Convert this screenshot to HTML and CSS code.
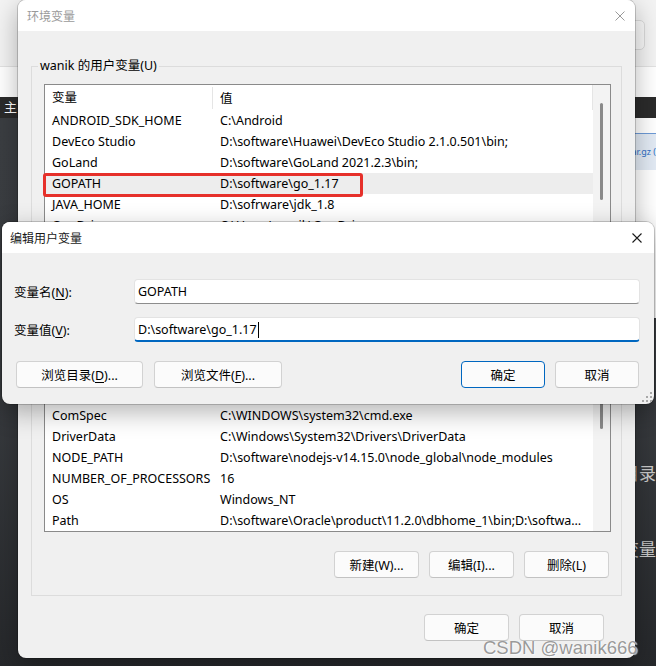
FILE: index.html
```html
<!DOCTYPE html>
<html lang="zh-CN">

<head>
  <meta charset="UTF-8" />
  <meta name="viewport" content="width=device-width, initial-scale=1.0" />
  <title>环境变量</title>
  <link rel="stylesheet" href="styles.css">
</head>

<body>
  <div class="desktop">

    <!-- browser page behind the dialogs -->
    <div class="browser">
      <div class="browser-top">
        <div class="search-box"></div>
      </div>
      <div class="browser-tabs"></div>
      <div class="browser-bar">主</div>
      <div class="page">
        <div class="page-side"></div>
        <div class="page-article">
          <div class="page-banner">
            <div class="file-link">go1.17.linux-amd64.tar.gz (</div>
          </div>
          <p class="page-heading first">解压到安装目录</p>
          <p class="page-heading">配置环境变量</p>
        </div>
      </div>
    </div>

    <!-- 环境变量 -->
    <section class="window env-window">
      <div class="title-bar">
        <span>环境变量</span>
        <svg class="close" width="10" height="10" viewBox="0 0 10 10">
          <path d="M0.5 0.5L9.5 9.5M9.5 0.5L0.5 9.5" stroke="currentColor" stroke-width="1" />
        </svg>
      </div>

      <div class="env-body">
        <fieldset class="group">
          <legend>wanik 的用户变量(U)</legend>
          <div class="listview">
            <div class="list-body">
              <div class="list-head">
                <div class="col-name">变量</div>
                <div class="col-value">值</div>
              </div>
              <div class="row">
                <div class="col-name">ANDROID_SDK_HOME</div>
                <div class="col-value">C:\Android</div>
              </div>
              <div class="row">
                <div class="col-name">DevEco Studio</div>
                <div class="col-value">D:\software\Huawei\DevEco Studio 2.1.0.501\bin;</div>
              </div>
              <div class="row">
                <div class="col-name">GoLand</div>
                <div class="col-value">D:\software\GoLand 2021.2.3\bin;</div>
              </div>
              <div class="row selected">
                <div class="col-name">GOPATH</div>
                <div class="col-value">D:\software\go_1.17</div>
              </div>
              <div class="row">
                <div class="col-name">JAVA_HOME</div>
                <div class="col-value">D:\sofrware\jdk_1.8</div>
              </div>
              <div class="row">
                <div class="col-name">OneDrive</div>
                <div class="col-value">C:\Users\wanik\OneDrive</div>
              </div>
              <div class="row">
                <div class="col-name">Path</div>
                <div class="col-value">C:\Users\wanik\AppData\Local\Microsoft\WindowsApps;</div>
              </div>
            </div>
            <div class="list-scroll">
              <div class="thumb user-thumb"></div>
            </div>
            <div class="mark"></div>
          </div>
          <div class="group-actions">
            <button class="btn">新建(N)...</button>
            <button class="btn">编辑(E)...</button>
            <button class="btn">删除(D)</button>
          </div>
        </fieldset>

        <fieldset class="group system">
          <legend>系统变量(S)</legend>
          <div class="listview">
            <div class="list-body">
              <div class="list-head">
                <div class="col-name">变量</div>
                <div class="col-value">值</div>
              </div>
              <div class="row">
                <div class="col-name">asl.log</div>
                <div class="col-value">Destination=file</div>
              </div>
              <div class="row">
                <div class="col-name">ComSpec</div>
                <div class="col-value">C:\WINDOWS\system32\cmd.exe</div>
              </div>
              <div class="row">
                <div class="col-name">DriverData</div>
                <div class="col-value">C:\Windows\System32\Drivers\DriverData</div>
              </div>
              <div class="row">
                <div class="col-name">NODE_PATH</div>
                <div class="col-value">D:\software\nodejs-v14.15.0\node_global\node_modules</div>
              </div>
              <div class="row">
                <div class="col-name">NUMBER_OF_PROCESSORS</div>
                <div class="col-value">16</div>
              </div>
              <div class="row">
                <div class="col-name">OS</div>
                <div class="col-value">Windows_NT</div>
              </div>
              <div class="row">
                <div class="col-name">Path</div>
                <div class="col-value">D:\software\Oracle\product\11.2.0\dbhome_1\bin;D:\software\Python39\Scripts\</div>
              </div>
            </div>
            <div class="list-scroll">
              <div class="thumb system-thumb"></div>
            </div>
          </div>
          <div class="group-actions">
            <button class="btn">新建(W)...</button>
            <button class="btn">编辑(I)...</button>
            <button class="btn">删除(L)</button>
          </div>
        </fieldset>

        <div class="env-actions">
          <button class="btn">确定</button>
          <button class="btn">取消</button>
        </div>
      </div>
    </section>

    <!-- 编辑用户变量 -->
    <section class="window edit-window">
      <div class="title-bar">
        <span>编辑用户变量</span>
        <svg class="close" width="10" height="10" viewBox="0 0 10 10">
          <path d="M0.5 0.5L9.5 9.5M9.5 0.5L0.5 9.5" stroke="currentColor" stroke-width="1.1" />
        </svg>
      </div>

      <div class="edit-body">
        <div class="field">
          <div class="field-label">变量名(<u>N</u>):</div>
          <div class="text-box">GOPATH</div>
        </div>
        <div class="field">
          <div class="field-label">变量值(<u>V</u>):</div>
          <div class="text-box focused">D:\software\go_1.17<span class="caret"></span></div>
        </div>
        <div class="edit-actions">
          <button class="btn browse-dir">浏览目录(<u>D</u>)...</button>
          <button class="btn browse-file">浏览文件(<u>F</u>)...</button>
          <button class="btn small default">确定</button>
          <button class="btn small">取消</button>
        </div>
      </div>

      <svg class="grip" width="10" height="10" viewBox="0 0 10 10">
        <rect x="8" y="0" width="2" height="2" fill="#a8a8a8" />
        <rect x="4" y="4" width="2" height="2" fill="#a8a8a8" />
        <rect x="8" y="4" width="2" height="2" fill="#a8a8a8" />
        <rect x="0" y="8" width="2" height="2" fill="#a8a8a8" />
        <rect x="4" y="8" width="2" height="2" fill="#a8a8a8" />
        <rect x="8" y="8" width="2" height="2" fill="#a8a8a8" />
      </svg>
    </section>

    <div class="watermark">CSDN @wanik666</div>
  </div>
</body>

</html>
```

FILE: styles.css
```css
* {
  box-sizing: border-box;
}

body {
  margin: 0;
  font-family: "Noto Sans", "Noto Sans CJK SC", sans-serif;
  font-size: 12.5px;
  color: #000;
}

.desktop {
  position: relative;
  width: 656px;
  height: 666px;
  overflow: hidden;
  background: #27292c;
}

/* browser page in the background */
.browser {
  display: flex;
  flex-direction: column;
  height: 100%;
}

.browser-top {
  height: 67px;
  background: #f3f3f3;
  border-bottom: 1px solid #e2e2e2;
  display: flex;
  justify-content: flex-end;
  padding: 20px 11px 0 0;
}

.search-box {
  width: 220px;
  height: 30px;
  border: 1px solid #dadada;
  border-radius: 5px;
  background: #f8f8f8;
}

.browser-tabs {
  height: 30px;
  background: #fff;
}

.browser-bar {
  height: 21px;
  background: #2b2b2b;
  color: #fff;
  font-size: 13px;
  line-height: 21px;
  padding-left: 4px;
}

.page {
  flex: 1;
  display: flex;
  background: linear-gradient(#3b3e42, #3a3d41 45%, #26282b);
}

.page-side {
  width: 320px;
}

.page-article {
  flex: 1;
  display: flex;
  flex-direction: column;
}

.page-banner {
  height: 200px;
  background: #fff;
  padding-top: 15px;
}

.file-link {
  height: 37px;
  background: #e2eaf4;
  border-top: 1px solid #6d9ad6;
  color: #2b6cc4;
  font-size: 9px;
  line-height: 36px;
  text-align: right;
  white-space: nowrap;
}

.page-heading {
  margin: 0;
  color: #c9c9c9;
  font-size: 17px;
  line-height: 24px;
  text-align: right;
  white-space: nowrap;
}

.page-heading.first {
  margin-top: 144px;
  margin-bottom: 52px;
}

/* windows */
.window {
  position: absolute;
  background: #f0f0f0;
  border-radius: 8px;
  overflow: hidden;
  box-shadow: 0 0 0 1px rgba(0, 0, 0, 0.18), 0 8px 26px rgba(0, 0, 0, 0.3);
}

.env-window {
  left: 18px;
  top: 0;
  width: 617px;
  height: 658px;
}

.edit-window {
  left: 2px;
  top: 222px;
  width: 652px;
  height: 182px;
}

.title-bar {
  height: 31px;
  background: #fff;
  display: flex;
  align-items: center;
  justify-content: space-between;
  font-size: 12px;
}

.env-window .title-bar {
  padding: 0 10px 0 9px;
  color: #9a9a9a;
}

.edit-window .title-bar {
  padding: 0 12px 0 8px;
  color: #1a1a1a;
}

.close {
  display: block;
}

/* 环境变量 body */
.env-body {
  padding: 27px 13px 0;
}

.group {
  margin: 0;
  min-width: 0;
  border: 1px solid #dcdcdc;
  padding: 10px 10px 17px 12px;
}

.group legend {
  padding: 0 2px;
  margin-left: -6px;
  line-height: 16px;
}

.group.system {
  margin-top: 9px;
}

.listview {
  position: relative;
  display: flex;
  height: 174px;
  border: 1px solid #8a8a8a;
  background: #fff;
}

.list-body {
  flex: 1;
  min-width: 0;
  overflow: hidden;
}

.list-head {
  display: flex;
  height: 25px;
  align-items: center;
  border-right: 1px solid #e5e5e5;
}

.list-head .col-name {
  border-right: 1px solid #e5e5e5;
  height: 22px;
  line-height: 22px;
}

.row {
  display: flex;
  height: 21px;
  line-height: 21px;
}

.row.selected {
  background: #ededed;
}

.col-name {
  width: 168px;
  flex-shrink: 0;
  padding-left: 7px;
  white-space: nowrap;
}

.col-value {
  flex: 1;
  min-width: 0;
  padding: 0 10px 0 7px;
  white-space: nowrap;
  overflow: hidden;
  text-overflow: ellipsis;
}

.list-scroll {
  width: 17px;
  background: #f3f3f3;
}

.thumb {
  width: 3px;
  margin: 18px auto 0;
  border-radius: 2px;
  background: #8a8a8a;
}

.user-thumb {
  height: 97px;
}

.system-thumb {
  height: 52px;
}

/* red annotation around the GOPATH row */
.mark {
  position: absolute;
  left: -2px;
  top: 88px;
  width: 320px;
  height: 24px;
  border: 3px solid #e6302a;
  border-radius: 3px;
}

.group-actions {
  display: flex;
  justify-content: flex-end;
  gap: 10px;
  margin-top: 20px;
  padding-right: 2px;
}

.group.system .group-actions {
  margin-top: 19px;
}

.env-actions {
  display: flex;
  justify-content: flex-end;
  gap: 10px;
  padding: 18px 18px 0 0;
}

.btn {
  width: 85px;
  height: 27px;
  padding: 0;
  border: 1px solid #d2d2d2;
  border-bottom-color: #c2c2c2;
  border-radius: 4px;
  background: #fbfbfb;
  font: inherit;
  color: #000;
}

.btn u,
.field-label u {
  text-underline-offset: 2px;
}

/* 编辑用户变量 body */
.edit-body {
  padding: 26px 14px 16px 12px;
}

.field {
  display: flex;
  align-items: center;
  height: 25px;
}

.field + .field {
  margin-top: 13px;
}

.field-label {
  width: 120px;
  flex-shrink: 0;
}

.text-box {
  flex: 1;
  height: 25px;
  padding-left: 3px;
  line-height: 23px;
  background: #fff;
  border: 1px solid #e3e3e3;
  border-bottom-color: #8d8d8d;
  border-radius: 4px;
  white-space: nowrap;
}

.text-box.focused {
  border-bottom: 2px solid #0067c0;
}

.caret {
  display: inline-block;
  width: 1px;
  height: 16px;
  margin-left: 1px;
  background: #000;
  vertical-align: -4px;
}

.edit-actions {
  display: flex;
  gap: 10px;
  margin-top: 19px;
  padding: 0 1px 0 2px;
}

.browse-dir {
  width: 127px;
}

.browse-file {
  width: 128px;
  margin-left: 1px;
}

.btn.small {
  width: 84px;
}

.btn.default {
  margin-left: auto;
  border-color: #0067c0;
}

.grip {
  position: absolute;
  right: 2px;
  bottom: 2px;
}

.watermark {
  position: absolute;
  left: 483px;
  top: 638px;
  font-family: "Liberation Sans", Arial, sans-serif;
  font-size: 18.5px;
  line-height: 20px;
  color: rgba(140, 140, 140, 0.9);
  text-shadow: 0 0 1px #fff, 1px 1px 1px rgba(255, 255, 255, 0.7);
  white-space: nowrap;
}
```
